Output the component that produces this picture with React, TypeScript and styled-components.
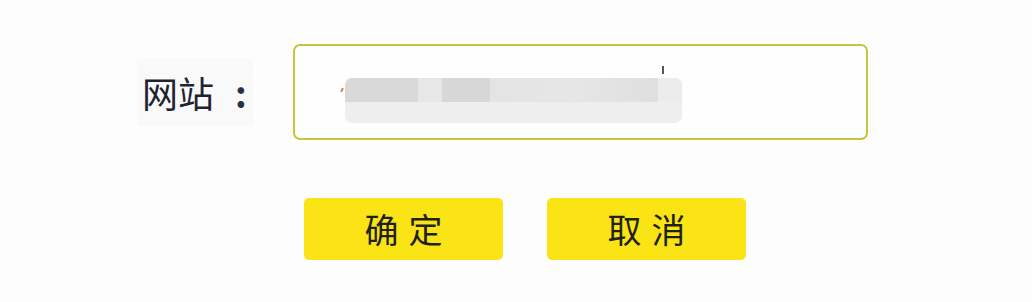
import React from 'react'
import styled, { createGlobalStyle } from 'styled-components'

const GlobalStyle = createGlobalStyle`
  html, body {
    margin: 0;
    padding: 0;
    background: #fdfdfd;
  }
  body {
    font-family: "Noto Sans CJK SC", "Noto Sans", sans-serif;
  }
`

const Page = styled.div`
  width: 1032px;
  height: 302px;
  padding-top: 44px;
  box-sizing: border-box;
  background: #fdfdfd;
`

const FieldRow = styled.div`
  display: flex;
  align-items: center;
  padding-left: 137px;
`

const Label = styled.label`
  display: flex;
  align-items: center;
  width: 116px;
  height: 67px;
  padding-left: 5px;
  box-sizing: border-box;
  background: #f9f9f9;
  color: #1f2330;
  font-size: 36px;
  line-height: 1;
  white-space: nowrap;
  margin-right: 40px;
`

const Colon = styled.span`
  margin-left: 21px;
  font-weight: 700;
  color: #2a3040;
`

const InputBox = styled.div`
  position: relative;
  width: 575px;
  height: 96px;
  box-sizing: border-box;
  border: 2px solid #c8c538;
  border-radius: 7px;
  background: #fefefe;
  padding: 32px 0 0 50px;
`

const Masked = styled.div`
  width: 337px;
  height: 45px;
  border-radius: 7px;
  overflow: hidden;
  display: flex;
  flex-direction: column;
  background: #eeeeee;
`

const MaskTop = styled.div`
  display: flex;
  height: 24px;
`

const MaskBlock = styled.div<{ $w: number; $c: string }>`
  width: ${p => p.$w}px;
  background: ${p => p.$c};
`

const Caret = styled.span`
  position: absolute;
  left: 367px;
  top: 20px;
  width: 2px;
  height: 8px;
  background: #555;
`

const Tick = styled.span`
  position: absolute;
  left: 46px;
  top: 42px;
  width: 2px;
  height: 4px;
  background: #d08050;
  transform: rotate(30deg);
`

const ButtonRow = styled.div`
  display: flex;
  gap: 44px;
  margin-top: 58px;
  padding-left: 304px;
`

const Button = styled.button`
  width: 199px;
  height: 62px;
  border: none;
  border-radius: 5px;
  background: #fbe416;
  color: #1e2218;
  font-family: "Noto Sans CJK SC", sans-serif;
  font-size: 34px;
  letter-spacing: 10px;
  padding: 0 0 0 10px;
  line-height: 1;
  cursor: pointer;
`

export default function App() {
  return (
    <Page>
      <GlobalStyle />
      <FieldRow>
        <Label>
          网站<Colon>:</Colon>
        </Label>
        <InputBox>
          <Tick />
          <Caret />
          <Masked>
            <MaskTop>
              <MaskBlock $w={73} $c="#d9d9d9" />
              <MaskBlock $w={24} $c="#e7e7e7" />
              <MaskBlock $w={48} $c="#d7d7d7" />
              <MaskBlock $w={168} $c="linear-gradient(90deg, #e4e4e4, #e6e6e6 50%, #dfdfdf)" />
              <MaskBlock $w={24} $c="#ececec" />
            </MaskTop>
          </Masked>
        </InputBox>
      </FieldRow>
      <ButtonRow>
        <Button>确定</Button>
        <Button>取消</Button>
      </ButtonRow>
    </Page>
  )
}
